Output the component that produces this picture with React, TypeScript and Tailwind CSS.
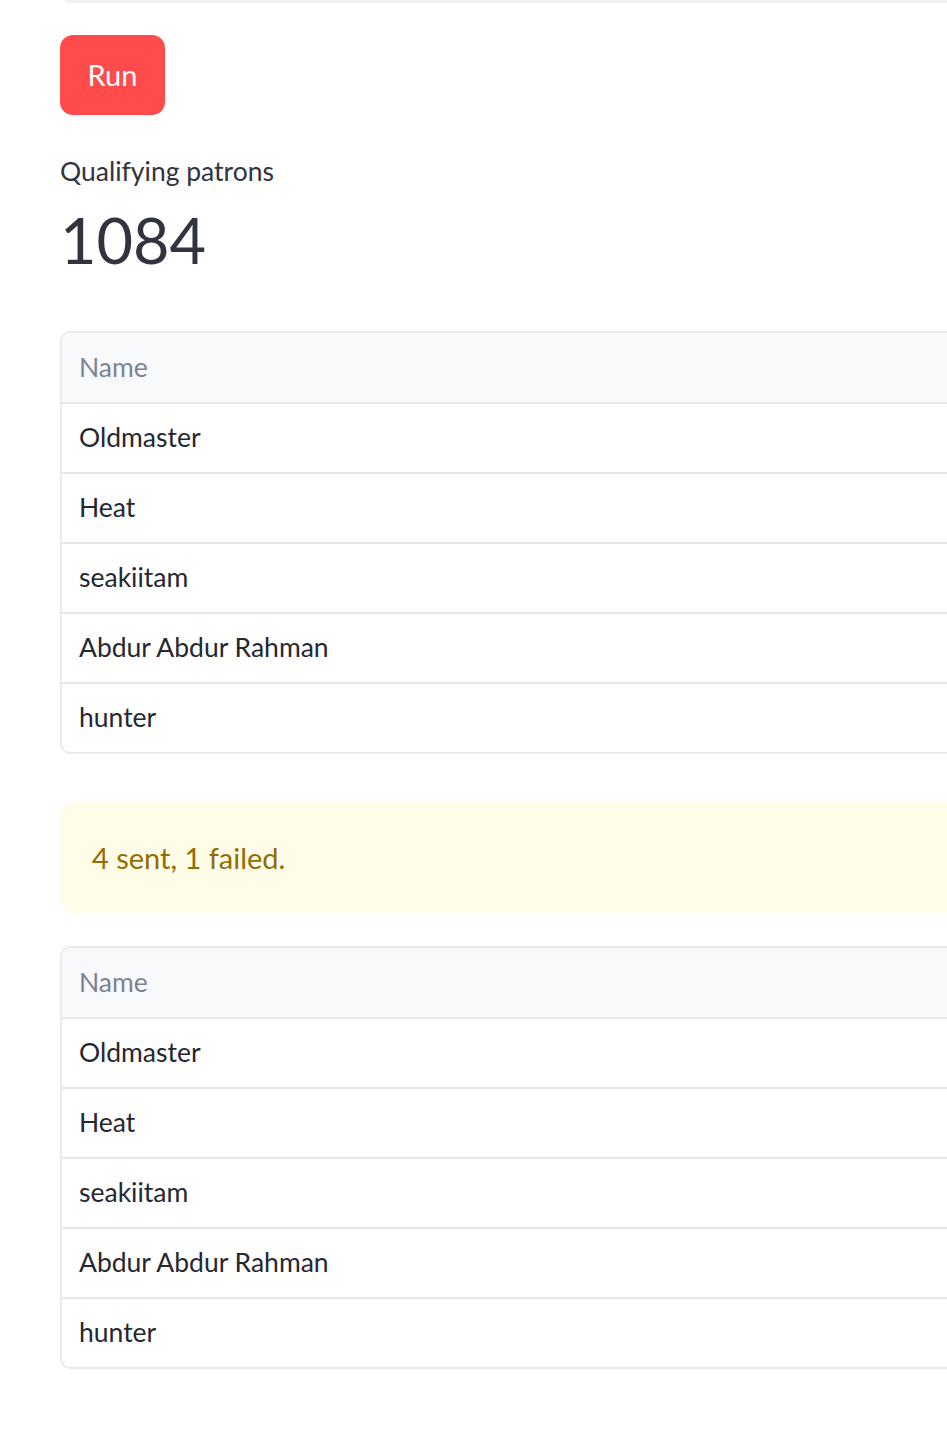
import React from 'react';

const names = ['Oldmaster', 'Heat', 'seakiitam', 'Abdur Abdur Rahman', 'hunter'];

function NameTable({ rows }: { rows: string[] }) {
  return (
    <div className="w-[1000px] rounded-[10px] border-2 border-[#e9eaee] overflow-hidden">
      <div className="h-[71px] bg-[#f8f9fb] border-b-2 border-[#e6e7eb] flex items-center px-[17px] text-[26.5px] text-[#7c8194]">
        Name
      </div>
      {rows.map((n, i) => (
        <div
          key={n}
          className={
            'flex items-center px-[17px] text-[26.5px] text-[#262730] ' +
            (i < rows.length - 1 ? 'h-[70px] border-b-2 border-[#e6e7eb]' : 'h-[68px]')
          }
        >
          {n}
        </div>
      ))}
    </div>
  );
}

export default function App() {
  return (
    <div className="w-[947px] h-[1443px] overflow-hidden bg-white font-['Lato',sans-serif] relative">
      {/* tail of the input box above */}
      <div className="ml-[65px] h-[3px] w-[1000px] bg-[#eff1f5] rounded-bl-[6px]" />
      <div className="pl-[60px] pt-[32px]">
        <button className="w-[105px] h-[80px] rounded-[13px] bg-[#ff4b4b] text-white text-[29px]">
          Run
        </button>
        <div className="mt-[38px] text-[26.5px] leading-[36px] text-[#31333f]">Qualifying patrons</div>
        <div className="mt-[11px] text-[63px] leading-[80px] text-[#31333f]">1084</div>
        <div className="mt-[51px]">
          <NameTable rows={names} />
        </div>
        <div className="mt-[48px] w-[1000px] h-[111px] rounded-[16px] bg-[#fffde7] flex items-center pl-[32px] text-[29px] text-[#926c05]">
          4 sent, 1 failed.
        </div>
        <div className="mt-[33px]">
          <NameTable rows={names} />
        </div>
      </div>
    </div>
  );
}
